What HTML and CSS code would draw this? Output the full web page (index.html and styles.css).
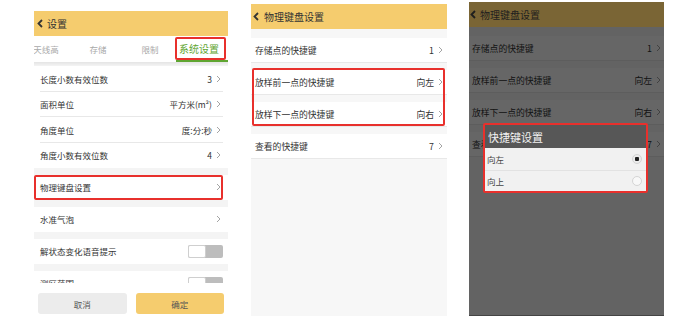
FILE: index.html
```html
<!DOCTYPE html>
<html lang="zh-CN">
<head>
    <meta charset="UTF-8">
    <meta name="viewport" content="width=device-width, initial-scale=1.0">
    <title>物理键盘设置</title>
    <link rel="stylesheet" href="styles.css">
</head>
<body>
    <div class="shots">
        <!-- 1: system settings -->
        <section class="phone p1">
            <header class="bar">
                <svg class="back" width="6" height="9" viewBox="0 0 6 9"><polyline points="5,1 1.5,4.5 5,8"/></svg>
                <span>设置</span>
            </header>
            <nav class="tabs">
                <span>天线高</span>
                <span>存储</span>
                <span>限制</span>
                <span class="on">系统设置</span>
            </nav>
            <div class="list">
                <div class="group">
                    <div class="row"><span class="label">长度小数有效位数</span><span class="value">3</span><svg class="arrow" width="5" height="8" viewBox="0 0 5 8"><polyline points="1,1 4,4 1,7"/></svg></div>
                    <div class="row"><span class="label">面积单位</span><span class="value">平方米(m²)</span><svg class="arrow" width="5" height="8" viewBox="0 0 5 8"><polyline points="1,1 4,4 1,7"/></svg></div>
                    <div class="row"><span class="label">角度单位</span><span class="value">度:分:秒</span><svg class="arrow" width="5" height="8" viewBox="0 0 5 8"><polyline points="1,1 4,4 1,7"/></svg></div>
                    <div class="row"><span class="label">角度小数有效位数</span><span class="value">4</span><svg class="arrow" width="5" height="8" viewBox="0 0 5 8"><polyline points="1,1 4,4 1,7"/></svg></div>
                </div>
                <div class="group">
                    <div class="row marked"><span class="label">物理键盘设置</span><svg class="arrow" width="5" height="8" viewBox="0 0 5 8"><polyline points="1,1 4,4 1,7"/></svg></div>
                </div>
                <div class="group">
                    <div class="row"><span class="label">水准气泡</span><svg class="arrow" width="5" height="8" viewBox="0 0 5 8"><polyline points="1,1 4,4 1,7"/></svg></div>
                </div>
                <div class="group">
                    <div class="row"><span class="label">解状态变化语音提示</span><span class="toggle"><i></i></span></div>
                </div>
                <div class="group">
                    <div class="row"><span class="label">测区范围</span><span class="toggle"><i></i></span></div>
                </div>
            </div>
            <footer class="actions">
                <button>取消</button>
                <button class="ok">确定</button>
            </footer>
        </section>

        <!-- 2: keyboard shortcuts -->
        <section class="phone p2">
            <header class="bar">
                <svg class="back" width="6" height="9" viewBox="0 0 6 9"><polyline points="5,1 1.5,4.5 5,8"/></svg>
                <span>物理键盘设置</span>
            </header>
            <div class="keys">
                <div class="key"><span class="label">存储点的快捷键</span><span class="value">1</span><svg class="arrow" width="5" height="8" viewBox="0 0 5 8"><polyline points="1,1 4,4 1,7"/></svg></div>
                <div class="pair">
                    <div class="key"><span class="label">放样前一点的快捷键</span><span class="value">向左</span><svg class="arrow" width="5" height="8" viewBox="0 0 5 8"><polyline points="1,1 4,4 1,7"/></svg></div>
                    <div class="key"><span class="label">放样下一点的快捷键</span><span class="value">向右</span><svg class="arrow" width="5" height="8" viewBox="0 0 5 8"><polyline points="1,1 4,4 1,7"/></svg></div>
                </div>
                <div class="key"><span class="label">查看的快捷键</span><span class="value">7</span><svg class="arrow" width="5" height="8" viewBox="0 0 5 8"><polyline points="1,1 4,4 1,7"/></svg></div>
            </div>
        </section>

        <!-- 3: shortcut picker dialog -->
        <section class="phone p3">
            <header class="bar">
                <svg class="back" width="6" height="9" viewBox="0 0 6 9"><polyline points="5,1 1.5,4.5 5,8"/></svg>
                <span>物理键盘设置</span>
            </header>
            <div class="keys">
                <div class="key"><span class="label">存储点的快捷键</span><span class="value">1</span><svg class="arrow" width="5" height="8" viewBox="0 0 5 8"><polyline points="1,1 4,4 1,7"/></svg></div>
                <div class="key"><span class="label">放样前一点的快捷键</span><span class="value">向左</span><svg class="arrow" width="5" height="8" viewBox="0 0 5 8"><polyline points="1,1 4,4 1,7"/></svg></div>
                <div class="key"><span class="label">放样下一点的快捷键</span><span class="value">向右</span><svg class="arrow" width="5" height="8" viewBox="0 0 5 8"><polyline points="1,1 4,4 1,7"/></svg></div>
                <div class="key"><span class="label">查看的快捷键</span><span class="value">7</span><svg class="arrow" width="5" height="8" viewBox="0 0 5 8"><polyline points="1,1 4,4 1,7"/></svg></div>
            </div>
            <div class="dialog">
                <div class="dialog-title">快捷键设置</div>
                <div class="option"><span>向左</span><span class="radio checked"></span></div>
                <div class="option"><span>向上</span><span class="radio"></span></div>
            </div>
        </section>
    </div>
</body>
</html>
```

FILE: styles.css
```css
:root {
    --yellow: #f5cc6e;
    --text: #333333;
    --muted: #a9a9a9;
    --line: #e8e8e8;
    --gap: #f4f4f4;
    --green: #5fa531;
    --mark: #e8302c;
}

* {
    margin: 0;
    padding: 0;
    box-sizing: border-box;
    font-family: "Noto Sans CJK SC", "Noto Sans", sans-serif;
}

body {
    width: 691px;
    height: 328px;
    overflow: hidden;
    background: #ffffff;
}

.shots {
    display: flex;
    align-items: flex-start;
    padding-left: 34px;
}

.phone {
    position: relative;
    display: flex;
    flex-direction: column;
    overflow: hidden;
    background: #f7f7f7;
}

.p1 {
    width: 194px;
    height: 307px;
    margin-top: 11px;
    background: #ffffff;
}

.p2 {
    width: 196px;
    height: 312px;
    margin-top: 4px;
    margin-left: 23px;
}

.p3 {
    width: 195px;
    height: 314px;
    margin-top: 2px;
    margin-left: 22px;
}

/* header */
.bar {
    flex: none;
    height: 25px;
    display: flex;
    align-items: center;
    gap: 4px;
    padding-left: 3px;
    background: var(--yellow);
    color: var(--text);
    font-size: 10px;
}

.p2 .bar {
    padding-left: 2px;
    gap: 5px;
}

.p3 .bar {
    padding-left: 1px;
    gap: 4px;
    background: #7a6535;
    color: #1e1e1e;
}

.back polyline {
    fill: none;
    stroke: #333333;
    stroke-width: 1.8;
}

.p3 .back polyline {
    stroke: #1e1e1e;
}

.arrow {
    flex: none;
    margin-left: 4px;
}

.arrow polyline {
    fill: none;
    stroke: #9a9a9a;
    stroke-width: 0.9;
}

/* tabs */
.tabs {
    flex: none;
    height: 26px;
    display: flex;
    justify-content: flex-end;
    overflow: hidden;
    background: #ffffff;
}

.tabs span {
    position: relative;
    flex: 0 0 52px;
    display: flex;
    align-items: center;
    justify-content: center;
    font-size: 8.5px;
    color: var(--muted);
}

.tabs .on {
    padding-right: 6px;
    font-size: 10px;
    color: var(--green);
    border-bottom: 2px solid var(--green);
}

.tabs .on::after {
    content: "";
    position: absolute;
    top: 1px;
    right: 2px;
    bottom: 0;
    left: -1px;
    border: 2px solid var(--mark);
    border-radius: 2px;
}

/* settings list */
.list {
    flex: 1;
    overflow: hidden;
    padding-top: 4px;
    background: linear-gradient(#e4e4e4, var(--gap) 4px) var(--gap);
}

.group + .group {
    margin-top: 6.5px;
}

.row {
    position: relative;
    height: 25.5px;
    display: flex;
    align-items: center;
    padding: 0 7px 0 6px;
    background: #ffffff;
    font-size: 8.5px;
    color: var(--text);
}

.group .row:not(:last-child) {
    background: linear-gradient(var(--line), var(--line)) no-repeat 6px 100% / calc(100% - 11px) 1px #ffffff;
}

.label {
    flex: 1;
    white-space: nowrap;
}

.value {
    white-space: nowrap;
}

.row.marked::after {
    content: "";
    position: absolute;
    top: 0;
    right: 5px;
    bottom: 0;
    left: 0;
    border: 2px solid var(--mark);
    border-radius: 2px;
}

.toggle {
    display: flex;
    width: 35px;
    height: 13px;
    margin-right: -2px;
    border-radius: 2px;
    background: #bdbdbd;
}

.toggle i {
    width: 18px;
    height: 13px;
    border: 1px solid #cfcfcf;
    border-radius: 2px;
    background: #ffffff;
}

.actions {
    flex: none;
    height: 35px;
    display: flex;
    gap: 9px;
    padding: 10px 4px 0;
    background: #ffffff;
}

.actions button {
    flex: 1;
    height: 21px;
    border: none;
    border-radius: 3px;
    background: #ececec;
    color: #555555;
    font-size: 8.5px;
}

.actions .ok {
    background: var(--yellow);
}

/* shortcut list */
.keys {
    padding-top: 9px;
}

.key {
    height: 25px;
    display: flex;
    align-items: center;
    padding: 0 4px;
    background: #ffffff;
    border-bottom: 1px solid var(--line);
    font-size: 8.8px;
    color: var(--text);
}

.key + .key,
.pair,
.pair + .key {
    margin-top: 7px;
}

.pair {
    position: relative;
}

.pair::after {
    content: "";
    position: absolute;
    top: -2px;
    right: 2px;
    bottom: 1px;
    left: 1px;
    border: 2px solid var(--mark);
    border-radius: 2px;
}

.p3 .key {
    padding: 0 3px;
}

.p3::after {
    content: "";
    position: absolute;
    top: 25px;
    right: 0;
    bottom: 0;
    left: 0;
    background: rgba(0, 0, 0, 0.6);
    border-bottom: 1px solid #444444;
}

/* dialog */
.dialog {
    position: absolute;
    z-index: 1;
    top: 121px;
    left: 14px;
    width: 165px;
    border: 2px solid var(--mark);
    border-radius: 2px;
    background: #f1f1f1;
}

.dialog-title {
    height: 23px;
    display: flex;
    align-items: center;
    padding-left: 3px;
    background: #575757;
    color: #f2f2f2;
    font-size: 11px;
}

.option {
    height: 21.5px;
    display: flex;
    align-items: center;
    justify-content: space-between;
    padding: 0 4px 0 2px;
    font-size: 8.5px;
    color: #444444;
}

.option + .option {
    border-top: 1px solid #e2e2e2;
}

.radio {
    width: 10px;
    height: 10px;
    border: 1px solid #d4d4d4;
    border-radius: 50%;
    background: #f8f8f8;
}

.radio.checked {
    background: radial-gradient(circle, #222222 2px, #ececec 2.5px);
}
```
